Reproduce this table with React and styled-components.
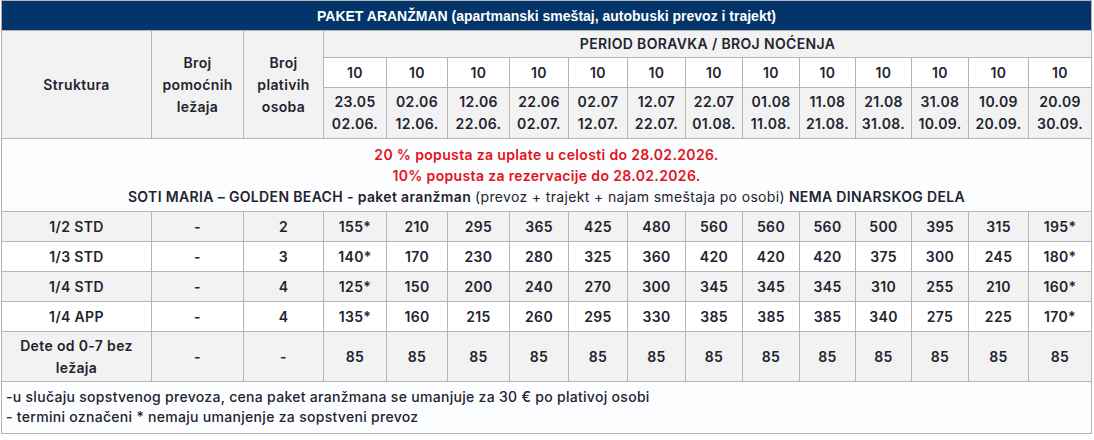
import React from 'react';
import styled, { createGlobalStyle } from 'styled-components';

const GlobalStyle = createGlobalStyle`
  body {
    margin: 0;
    background: #ffffff;
    font-family: Inter, "Noto Sans", sans-serif;
    color: #23232f;
  }
`;

const colWidths = [150, 92, 80, 63, 61, 62, 59, 59, 58, 57, 57, 56, 56, 57, 60, 63];

const periods = [
  ['23.05', '02.06.'],
  ['02.06', '12.06.'],
  ['12.06', '22.06.'],
  ['22.06', '02.07.'],
  ['02.07', '12.07.'],
  ['12.07', '22.07.'],
  ['22.07', '01.08.'],
  ['01.08', '11.08.'],
  ['11.08', '21.08.'],
  ['21.08', '31.08.'],
  ['31.08', '10.09.'],
  ['10.09', '20.09.'],
  ['20.09', '30.09.'],
];

const rows = [
  { name: '1/2 STD', extra: '-', persons: '2', prices: ['155*', '210', '295', '365', '425', '480', '560', '560', '560', '500', '395', '315', '195*'] },
  { name: '1/3 STD', extra: '-', persons: '3', prices: ['140*', '170', '230', '280', '325', '360', '420', '420', '420', '375', '300', '245', '180*'] },
  { name: '1/4 STD', extra: '-', persons: '4', prices: ['125*', '150', '200', '240', '270', '300', '345', '345', '345', '310', '255', '210', '160*'] },
  { name: '1/4 APP', extra: '-', persons: '4', prices: ['135*', '160', '215', '260', '295', '330', '385', '385', '385', '340', '275', '225', '170*'] },
  { name: 'Dete od 0-7 bez ležaja', extra: '-', persons: '-', prices: Array(13).fill('85'), tall: true },
];

const Wrapper = styled.div`
  padding: 0 3px 0 1px;
`;

const Table = styled.table`
  border-collapse: collapse;
  table-layout: fixed;
  width: 1090px;
  font-size: 14px;
  font-weight: 600;
  letter-spacing: 0.35px;
  border: 1px solid #b4b4b4;
`;

const TitleCell = styled.th`
  height: 29px;
  padding: 0;
  background: #03356a;
  color: #ffffff;
  font-family: "Liberation Sans", Arial, sans-serif;
  font-weight: 700;
  font-size: 14px;
  letter-spacing: 0;
  text-align: center;
  border: 1px solid #b4b4b4;
`;

const HeadCell = styled.th`
  padding: 0 2px;
  font-weight: 600;
  text-align: center;
  line-height: 22px;
  background: ${p => (p.$light ? '#ffffff' : '#f2f2f2')};
  border: 1px solid #b4b4b4;
  height: ${p => p.$h || 26}px;
`;

const NoteCell = styled.td`
  height: 72px;
  padding: 0;
  text-align: center;
  background: #fcfdff;
  border: 1px solid #b4b4b4;
`;

const NoteLine = styled.div`
  line-height: 21px;
  color: ${p => (p.$red ? '#e2121b' : 'inherit')};
  font-weight: 600;
`;

const Strong = styled.span`
  font-weight: 600;
`;

const Light = styled.span`
  font-weight: 400;
`;

const Row = styled.tr`
  background: ${p => (p.$shade ? '#f2f2f2' : '#ffffff')};
`;

const Cell = styled.td`
  height: ${p => (p.$tall ? 49 : 29)}px;
  padding: 0 2px;
  text-align: center;
  line-height: 22px;
  border: 1px solid #b4b4b4;
`;

const FootCell = styled.td`
  height: 43px;
  padding: 5px 4px 3px;
  vertical-align: top;
  line-height: 20px;
  font-weight: 500;
  letter-spacing: 0.3px;
  background: #fcfdff;
  border: 1px solid #b4b4b4;
`;

export default function App() {
  return (
    <Wrapper>
      <GlobalStyle />
      <Table>
        <colgroup>
          {colWidths.map((w, i) => (
            <col key={i} style={{ width: w }} />
          ))}
        </colgroup>
        <thead>
          <tr>
            <TitleCell colSpan={16}>PAKET ARANŽMAN (apartmanski smeštaj, autobuski prevoz i trajekt)</TitleCell>
          </tr>
          <tr>
            <HeadCell rowSpan={3}>Struktura</HeadCell>
            <HeadCell rowSpan={3}>
              Broj
              <br />
              pomoćnih
              <br />
              ležaja
            </HeadCell>
            <HeadCell rowSpan={3}>
              Broj
              <br />
              plativih
              <br />
              osoba
            </HeadCell>
            <HeadCell colSpan={13} $h={26}>PERIOD BORAVKA / BROJ NOĆENJA</HeadCell>
          </tr>
          <tr>
            {periods.map((_, i) => (
              <HeadCell key={i} $light $h={29}>10</HeadCell>
            ))}
          </tr>
          <tr>
            {periods.map(([a, b], i) => (
              <HeadCell key={i} $h={50}>
                {a}
                <br />
                {b}
              </HeadCell>
            ))}
          </tr>
        </thead>
        <tbody>
          <tr>
            <NoteCell colSpan={16}>
              <NoteLine $red>20 % popusta za uplate u celosti do 28.02.2026.</NoteLine>
              <NoteLine $red>10% popusta za rezervacije do 28.02.2026.</NoteLine>
              <NoteLine>
                <Strong>SOTI MARIA – GOLDEN BEACH - paket aranžman</Strong>{' '}
                <Light>(prevoz + trajekt + najam smeštaja po osobi)</Light>{' '}
                <Strong>NEMA DINARSKOG DELA</Strong>
              </NoteLine>
            </NoteCell>
          </tr>
          {rows.map((r, i) => (
            <Row key={r.name} $shade={i % 2 === 0}>
              <Cell $tall={r.tall}>{r.name}</Cell>
              <Cell $tall={r.tall}>{r.extra}</Cell>
              <Cell $tall={r.tall}>{r.persons}</Cell>
              {r.prices.map((p, j) => (
                <Cell key={j} $tall={r.tall}>{p}</Cell>
              ))}
            </Row>
          ))}
          <tr>
            <FootCell colSpan={16}>
              -u slučaju sopstvenog prevoza, cena paket aranžmana se umanjuje za 30 € po plativoj osobi
              <br />
              - termini označeni * nemaju umanjenje za sopstveni prevoz
            </FootCell>
          </tr>
        </tbody>
      </Table>
    </Wrapper>
  );
}
